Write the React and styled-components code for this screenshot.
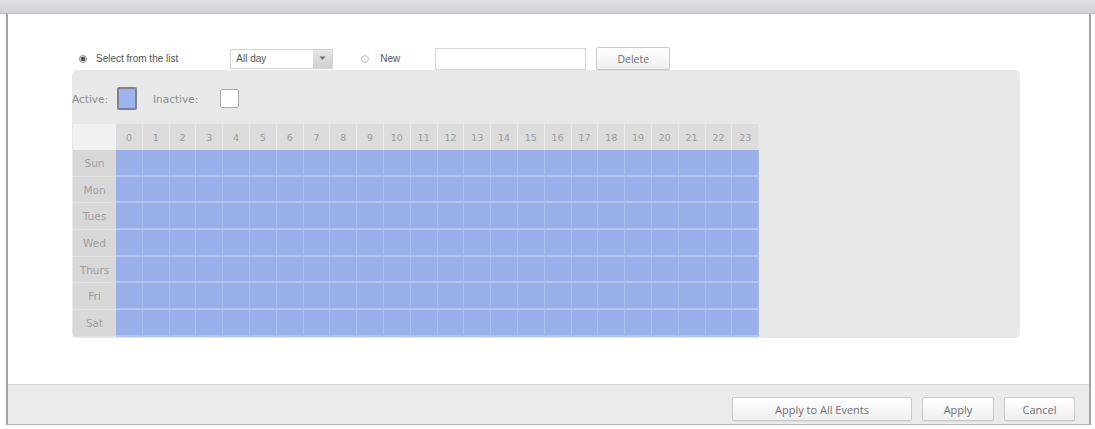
import React from 'react';
import styled, { createGlobalStyle } from 'styled-components';

const GlobalStyle = createGlobalStyle`
  body {
    margin: 0;
    background: #ffffff;
    font-family: "Liberation Sans", Arial, sans-serif;
  }
`;

const HOURS = Array.from({ length: 24 }, (_, i) => i);
const DAYS = ['Sun', 'Mon', 'Tues', 'Wed', 'Thurs', 'Fri', 'Sat'];

const Page = styled.div`
  width: 1095px;
  height: 429px;
  display: flex;
  flex-direction: column;
  overflow: hidden;
`;

const TitleBar = styled.div`
  height: 13px;
  background: linear-gradient(#dde1e5, #cfd4d9);
  border-bottom: 1px solid #b9bdc1;
`;

const Dialog = styled.div`
  margin: 0 4px 0 6px;
  display: flex;
  flex-direction: column;
  border-left: 2px solid #a3a3a3;
  border-right: 2px solid #a3a3a3;
  border-bottom: 1px solid #b5b5b5;
`;

const Body = styled.div`
  height: 370px;
  box-sizing: border-box;
  padding: 33px 0 0 64px;
  background: #ffffff;
`;

const ChooserRow = styled.div`
  display: flex;
  align-items: center;
  height: 23px;
  padding-left: 7px;
`;

const Radio = styled.span`
  width: 8px;
  height: 8px;
  box-sizing: border-box;
  border-radius: 50%;
  border: 1px solid ${(p) => (p.checked ? '#8a8a8a' : '#c4c4c4')};
  background: ${(p) =>
    p.checked ? 'radial-gradient(circle, #4a4a4a 0 2px, #e6e6e6 2.5px)' : '#f3f3f3'};
  margin-right: ${(p) => (p.checked ? 9 : 11)}px;
  flex-shrink: 0;
`;

const Label = styled.span`
  font-size: 10px;
  color: #555555;
  white-space: nowrap;
  margin-right: ${(p) => p.gap || 0}px;
`;

const Select = styled.div`
  width: 103px;
  height: 20px;
  box-sizing: border-box;
  border: 1px solid #d2d2d2;
  display: flex;
  align-items: stretch;
  margin-right: 28px;
  background: #fff;
`;

const SelectText = styled.span`
  flex: 1;
  font-size: 10px;
  color: #555;
  padding-left: 5px;
  line-height: 18px;
`;

const SelectArrow = styled.span`
  width: 19px;
  background: linear-gradient(#e6e6e6, #cfcfcf);
  display: flex;
  align-items: center;
  justify-content: center;
`;

const TextInput = styled.div`
  width: 151px;
  height: 22px;
  box-sizing: border-box;
  border: 1px solid #d6d6d6;
  margin-right: 10px;
  background: #fff;
`;

const Button = styled.button`
  height: ${(p) => p.h || 23}px;
  width: ${(p) => p.w}px;
  box-sizing: border-box;
  border: 1px solid #c9c9c9;
  border-radius: 2px;
  background: linear-gradient(#ffffff, #efefef);
  font-family: "Open Sans", "Liberation Sans", Arial, sans-serif;
  font-size: ${(p) => p.fs || 11}px;
  color: #707070;
  padding: 0;
  box-shadow: 0 1px 0 #dcdcdc;
`;

const Panel = styled.div`
  width: 948px;
  height: 268px;
  box-sizing: border-box;
  background: #e8e8e8;
  border-radius: 5px;
  padding-top: 17px;
`;

const LegendRow = styled.div`
  display: flex;
  align-items: center;
  height: 23px;
  margin-bottom: 14px;
`;

const LegendLabel = styled.span`
  font-family: "DejaVu Sans", Verdana, sans-serif;
  font-size: 10.5px;
  color: #8d8d8d;
  width: ${(p) => p.w}px;
`;

const Swatch = styled.span`
  box-sizing: border-box;
  width: ${(p) => (p.active ? 20 : 19)}px;
  height: ${(p) => (p.active ? 23 : 19)}px;
  border: ${(p) => (p.active ? '2px solid #7b8391' : '1px solid #a9a9a9')};
  border-radius: 2px;
  background: ${(p) => (p.active ? '#9cb3ec' : '#ffffff')};
  margin-right: ${(p) => p.gap || 0}px;
`;

const Grid = styled.div`
  display: grid;
  grid-template-columns: 43px repeat(24, 26.8px);
  grid-template-rows: 26px repeat(7, 26.7px);
  margin-left: 1px;
  width: max-content;
`;

const Corner = styled.div`
  background: #f1f1f1;
`;

const HourCell = styled.div`
  background: #dcdcdc;
  border-right: 1px solid #e9e9e9;
  font-family: "DejaVu Sans", Verdana, sans-serif;
  font-size: 9.5px;
  color: #9b9b9b;
  display: flex;
  align-items: center;
  justify-content: center;
`;

const DayCell = styled.div`
  background: #d8d8d8;
  border-bottom: 1px solid #e2e2e2;
  font-family: "DejaVu Sans", Verdana, sans-serif;
  font-size: 10.5px;
  color: #9d9d9d;
  display: flex;
  align-items: center;
  justify-content: center;
`;

const SlotCell = styled.div`
  background: ${(p) => (p.active ? '#99b0ea' : '#ffffff')};
  border-right: 1px solid #abbdee;
  border-bottom: 2px solid #b6c5f0;
`;

const Footer = styled.div`
  height: 40px;
  box-sizing: border-box;
  background: #ebebeb;
  border-top: 1px solid #d6d6d6;
  display: flex;
  justify-content: flex-end;
  align-items: flex-start;
  padding: 12px 14px 0 0;
  gap: 10px;
`;

function ArrowDown() {
  return (
    <svg width="7" height="5" viewBox="0 0 7 5">
      <path d="M0.5 0.5 L3.5 4 L6.5 0.5 Z" fill="#6a6a6a" />
    </svg>
  );
}

export default function App() {
  return (
    <Page>
      <GlobalStyle />
      <TitleBar />
      <Dialog>
        <Body>
          <ChooserRow>
            <Radio checked />
            <Label gap={52}>Select from the list</Label>
            <Select>
              <SelectText>All day</SelectText>
              <SelectArrow>
                <ArrowDown />
              </SelectArrow>
            </Select>
            <Radio />
            <Label gap={35}>New</Label>
            <TextInput />
            <Button w={74} fs={10.5}>Delete</Button>
          </ChooserRow>
          <Panel>
            <LegendRow>
              <LegendLabel w={45}>Active:</LegendLabel>
              <Swatch active gap={16} />
              <LegendLabel w={67}>Inactive:</LegendLabel>
              <Swatch />
            </LegendRow>
            <Grid>
              <Corner />
              {HOURS.map((h) => (
                <HourCell key={h}>{h}</HourCell>
              ))}
              {DAYS.map((d) => (
                <React.Fragment key={d}>
                  <DayCell>{d}</DayCell>
                  {HOURS.map((h) => (
                    <SlotCell key={h} active />
                  ))}
                </React.Fragment>
              ))}
            </Grid>
          </Panel>
        </Body>
        <Footer>
          <Button w={180} h={24}>Apply to All Events</Button>
          <Button w={72} h={24}>Apply</Button>
          <Button w={71} h={24}>Cancel</Button>
        </Footer>
      </Dialog>
    </Page>
  );
}
